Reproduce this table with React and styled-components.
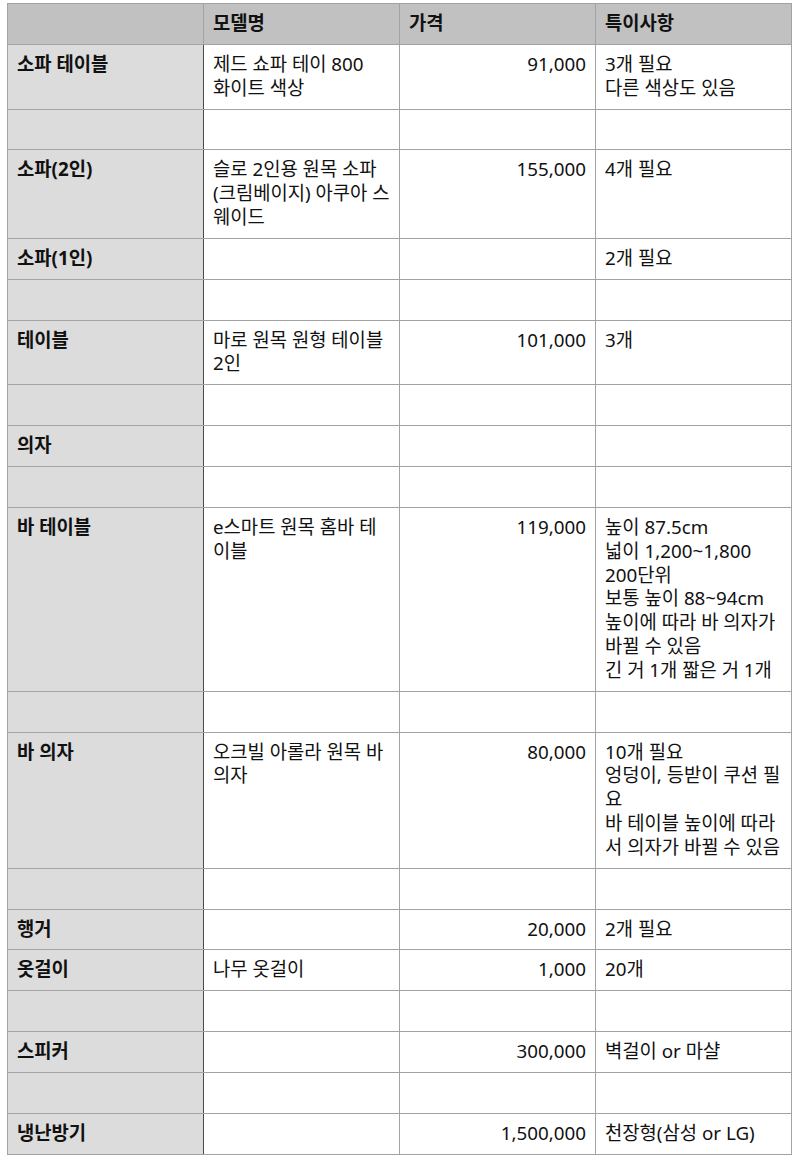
import React from "react";
import styled, { createGlobalStyle } from "styled-components";

const Global = createGlobalStyle`
  html, body { margin: 0; padding: 0; background: #fff; }
  body { padding: 3px 0 0 7px; font-family: "Noto Sans", "Noto Sans CJK KR", sans-serif; color: #111; }
`;

const Table = styled.table`
  border-collapse: collapse;
  table-layout: fixed;
  width: 785px;
  font-size: 18.8px;
`;

const Col = styled.col`
  width: 196px;
`;

const HeadCell = styled.th`
  background: #c0c1c0;
  border: 1px solid #a3a3a3;
  padding: 8px 9px;
  text-align: left;
  font-weight: 700;
  vertical-align: top;
`;

const LabelCell = styled.th`
  background: #dcdcdc;
  border: 1px solid #a3a3a3;
  border-right: 1px solid #4a4a4a;
  padding: 8px 9px;
  text-align: left;
  font-weight: 700;
  vertical-align: top;
`;

const Cell = styled.td`
  background: #fff;
  border: 1px solid #a3a3a3;
  padding: 8px 9px;
  text-align: ${(p) => (p.$num ? "right" : "left")};
  vertical-align: top;
`;

const Line = styled.div`
  height: 23.85px;
  line-height: 23.85px;
  white-space: pre;
  overflow: visible;
`;

const rows = [
  ["소파 테이블", "제드 쇼파 테이 800\n화이트 색상", "91,000", "3개 필요\n다른 색상도 있음"],
  ["", "", "", ""],
  ["소파(2인)", "슬로 2인용 원목 소파\n(크림베이지) 아쿠아 스\n웨이드", "155,000", "4개 필요"],
  ["소파(1인)", "", "", "2개 필요"],
  ["", "", "", ""],
  ["테이블", "마로 원목 원형 테이블\n2인", "101,000", "3개"],
  ["", "", "", ""],
  ["의자", "", "", ""],
  ["", "", "", ""],
  ["바 테이블", "e스마트 원목 홈바 테\n이블", "119,000", "높이 87.5cm\n넓이 1,200~1,800\n200단위\n보통 높이 88~94cm\n높이에 따라 바 의자가\n바뀔 수 있음\n긴 거 1개 짧은 거 1개"],
  ["", "", "", ""],
  ["바 의자", "오크빌 아롤라 원목 바\n의자", "80,000", "10개 필요\n엉덩이, 등받이 쿠션 필\n요\n바 테이블 높이에 따라\n서 의자가 바뀔 수 있음"],
  ["", "", "", ""],
  ["행거", "", "20,000", "2개 필요"],
  ["옷걸이", "나무 옷걸이", "1,000", "20개"],
  ["", "", "", ""],
  ["스피커", "", "300,000", "벽걸이 or 마샬"],
  ["", "", "", ""],
  ["냉난방기", "", "1,500,000", "천장형(삼성 or LG)"],
];

const lines = (t) => t.split("\n").map((l, i) => <Line key={i}>{l}</Line>);

export default function App() {
  return (
    <>
      <Global />
      <Table>
        <colgroup>
          <Col />
          <Col />
          <Col />
          <Col />
        </colgroup>
        <thead>
          <tr>
            <HeadCell><Line /></HeadCell>
            <HeadCell><Line>모델명</Line></HeadCell>
            <HeadCell><Line>가격</Line></HeadCell>
            <HeadCell><Line>특이사항</Line></HeadCell>
          </tr>
        </thead>
        <tbody>
          {rows.map((r, i) => (
            <tr key={i}>
              <LabelCell>{lines(r[0])}</LabelCell>
              <Cell>{lines(r[1])}</Cell>
              <Cell $num>{lines(r[2])}</Cell>
              <Cell>{lines(r[3])}</Cell>
            </tr>
          ))}
        </tbody>
      </Table>
    </>
  );
}
